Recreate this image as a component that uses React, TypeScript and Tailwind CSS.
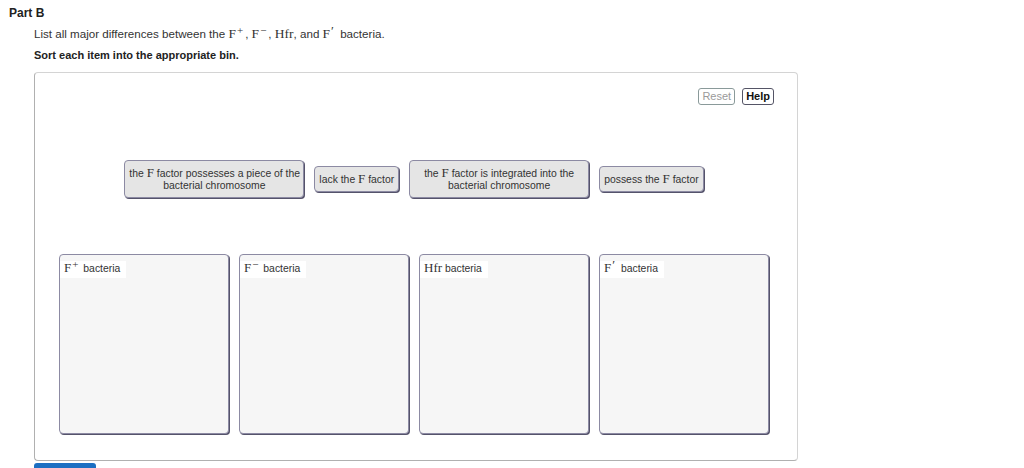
import React from "react";

function M({ children, sup, size = "text-[13px]" }: { children: React.ReactNode; sup?: string; size?: string }) {
  const prime = sup === "′";
  return (
    <span className={`font-['Liberation_Serif',serif] leading-none ${size}`}>
      {children}
      {sup ? (
        <span
          className={
            prime
              ? "relative -top-[3px] ml-[1px] mr-[3px] text-[13px] leading-none"
              : "relative -top-[4px] ml-[1px] mr-[2px] text-[11px] leading-none"
          }
        >
          {sup}
        </span>
      ) : null}
    </span>
  );
}

function Card({ children, w = "" }: { children: React.ReactNode; w?: string }) {
  return (
    <div className={`${w} whitespace-nowrap rounded-[4px] border border-[#8c8aa3] bg-[#e5e5e5] px-[4px] py-[5px] text-center text-[10.4px] leading-[12px] text-[#333] shadow-[1px_1px_0_#55536b]`}>
      {children}
    </div>
  );
}

function Bin({ label }: { label: React.ReactNode }) {
  return (
    <div className="h-[180px] w-[170px] rounded-[4px] border border-[#8c8aa3] bg-[#f6f6f6] shadow-[1px_1px_0_#55536b]">
      <div className="inline-flex h-[17px] items-center bg-white pl-[4px] pr-[6px] pb-[4px] text-[10.4px] leading-none text-[#333]">
        <span className="whitespace-nowrap">{label}</span>
      </div>
    </div>
  );
}

export default function App() {
  return (
    <div className="relative h-[468px] w-[1024px] overflow-hidden bg-white font-['Liberation_Sans',Arial,sans-serif] text-[#333]">
      <div className="pl-[9px] pt-[6px] text-[12px] font-bold leading-[14px] text-[#222]">Part B</div>
      <div className="pl-[34px] pt-[7px] text-[11.6px] leading-[14px] text-[#333]">
        List all major differences between the <M sup="+" size="text-[13.5px]">F</M>, <M sup="−" size="text-[13.5px]">F</M>,{" "}
        <M size="text-[13.5px]">Hfr</M>, and <M sup="′" size="text-[13.5px]">F</M> bacteria.
      </div>
      <div className="pl-[34px] pt-[7px] text-[11px] font-bold leading-[14px] text-[#222]">
        Sort each item into the appropriate bin.
      </div>
      <div className="ml-[34px] mt-[10px] h-[389px] w-[764px] rounded-[4px] border border-[#d4d4d4] border-l-[#b0b0b0] border-b-[#b0b0b0]">
        <div className="flex justify-end gap-[7px] pr-[23px] pt-[15px]">
          <div className="rounded-[3px] border border-[#8a9a9a] px-[3px] text-[11px] leading-[15px] text-[#9a9a9a]">
            Reset
          </div>
          <div className="rounded-[3px] border border-[#556] px-[3px] text-[11px] font-bold leading-[15px] text-[#111]">
            Help
          </div>
        </div>
        <div className="mt-[56px] flex h-[36px] items-center justify-center gap-[10px] pr-[4px]">
          <Card w="w-[180px]">
            the <M>F</M> factor possesses a piece of the
            <br />
            bacterial chromosome
          </Card>
          <Card>
            lack the <M>F</M> factor
          </Card>
          <Card w="w-[180px]">
            the <M>F</M> factor is integrated into the
            <br />
            bacterial chromosome
          </Card>
          <Card>
            possess the <M>F</M> factor
          </Card>
        </div>
        <div className="mt-[57px] flex justify-center gap-[10px] pr-[4px]">
          <Bin label={<><M sup="+">F</M> bacteria</>} />
          <Bin label={<><M sup="−">F</M> bacteria</>} />
          <Bin label={<><M>Hfr</M> bacteria</>} />
          <Bin label={<><M sup="′">F</M> bacteria</>} />
        </div>
      </div>
      <div className="ml-[34px] mt-[2px] h-[10px] w-[62px] rounded-t-[3px] bg-[#1c6fc2]" />
    </div>
  );
}
